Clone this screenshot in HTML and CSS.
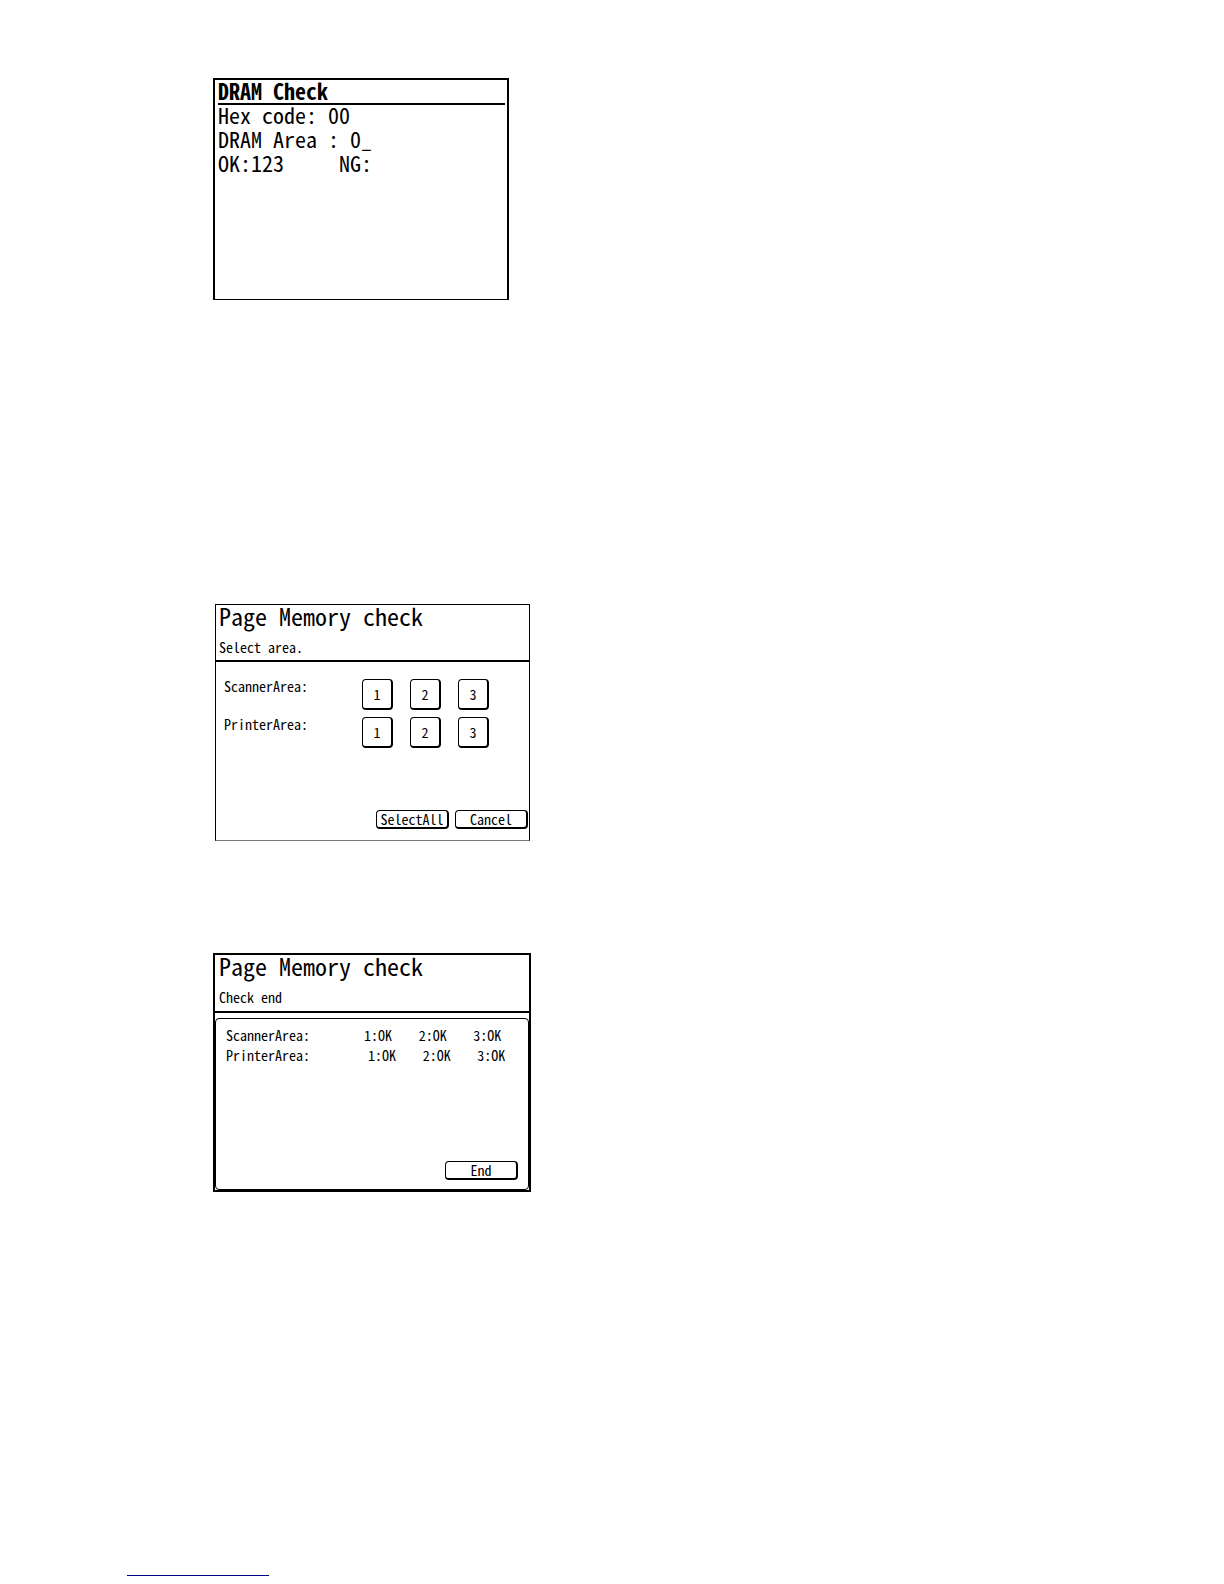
FILE: index.html
```html
<!DOCTYPE html>
<html lang="en">
<head>
    <meta charset="UTF-8">
    <meta name="viewport" content="width=device-width, initial-scale=1.0">
    <title>Memory check</title>
    <link rel="stylesheet" href="styles.css">
</head>
<body>
    <main class="page">
        <section class="screen dram">
            <h2>DRAM Check</h2>
            <p>Hex code: 00</p>
            <p>DRAM Area : 0_</p>
            <p>OK:123     NG:</p>
        </section>

        <section class="screen select">
            <header>
                <h2>Page Memory check</h2>
                <p>Select area.</p>
            </header>
            <div class="areas">
                <span>ScannerArea:</span>
                <button type="button">1</button>
                <button type="button">2</button>
                <button type="button">3</button>
                <span>PrinterArea:</span>
                <button type="button">1</button>
                <button type="button">2</button>
                <button type="button">3</button>
            </div>
            <div class="actions">
                <button type="button">SelectAll</button>
                <button type="button">Cancel</button>
            </div>
        </section>

        <section class="screen end">
            <header>
                <h2>Page Memory check</h2>
                <p>Check end</p>
            </header>
            <div class="panel">
                <table>
                    <tr>
                        <th scope="row">ScannerArea:</th>
                        <td>1:OK</td>
                        <td>2:OK</td>
                        <td>3:OK</td>
                    </tr>
                    <tr class="printer">
                        <th scope="row">PrinterArea:</th>
                        <td>1:OK</td>
                        <td>2:OK</td>
                        <td>3:OK</td>
                    </tr>
                </table>
                <div class="actions">
                    <button type="button">End</button>
                </div>
            </div>
        </section>
    </main>
    <footer>
        <hr>
    </footer>
</body>
</html>
```

FILE: styles.css
```css
* {
    box-sizing: border-box;
}
body {
    margin: 0;
    background: #fff;
    color: #000;
    /* half-width latin glyphs, like the panel font */
    font-family: "Noto Sans CJK JP", "Liberation Mono", monospace;
    font-feature-settings: "hwid";
    font-size: 14px;
    line-height: 20px;
}
h2, p {
    margin: 0;
    font-weight: normal;
    white-space: pre-wrap;
}
.page {
    padding: 78px 16px 0 213px;
}
.screen {
    display: flex;
    flex-direction: column;
    width: 100%;
    max-width: 318px;
    border: 2px solid #000;
}
button {
    height: 19px;
    padding: 0;
    border: 1px solid #000;
    border-right-width: 2px;
    border-bottom-width: 2px;
    border-radius: 4px;
    background: #fff;
    color: #000;
    font: inherit;
    font-feature-settings: inherit;
    line-height: 16px;
}

/* DRAM check */
.dram {
    max-width: 296px;
    min-height: 222px;
    padding: 0 2px 0 3px;
    border-bottom-width: 1px;
    font-size: 22px;
    line-height: 24px;
}
.dram h2 {
    margin-bottom: -3px;
    padding-bottom: 3px;
    border-bottom: 2px solid #000;
    font-size: 22px;
    font-weight: bold;
    line-height: 20px;
}

/* header of the two page memory screens */
header {
    height: 58px;
    padding-left: 4px;
    border-bottom: 2px solid #000;
}
header h2 {
    font-size: 24px;
    line-height: 22px;
}
header p {
    padding-top: 8px;
    line-height: 24px;
}

/* area selection */
.select {
    max-width: 315px;
    min-height: 237px;
    margin: 304px 0 0 2px;
    border-width: 1px;
    border-bottom-color: #777;
}
.select header {
    height: 57px;
    padding-left: 3px;
}
.areas {
    display: grid;
    grid-template-columns: 121px 31px 31px 31px;
    gap: 7px 17px;
    padding: 17px 8px 0;
}
.areas span {
    line-height: 14px;
}
.areas button {
    height: 31px;
}
.actions {
    display: flex;
    justify-content: flex-end;
    gap: 6px;
    margin-top: auto;
}
.actions button {
    width: 73px;
}
.select .actions {
    padding: 0 1px 11px 0;
}

/* result */
.end {
    min-height: 239px;
    margin-top: 112px;
}
.panel {
    display: flex;
    flex: 1;
    flex-direction: column;
    margin-top: 5px;
    padding: 6px 0 9px 10px;
    border: 1px solid #000;
    border-radius: 4px;
}
.panel table {
    width: 100%;
    table-layout: fixed;
    border-collapse: collapse;
}
.panel th {
    width: 138px;
    padding: 0;
    font-weight: normal;
    text-align: left;
}
.panel td {
    padding: 0;
}
.panel .printer td {
    padding-left: 4px;
}
.panel .actions {
    padding-right: 10px;
}

footer {
    padding: 383px 16px 8px 127px;
}
footer hr {
    width: 142px;
    height: 1px;
    margin: 0;
    border: 0;
    background: #000080;
}
```
